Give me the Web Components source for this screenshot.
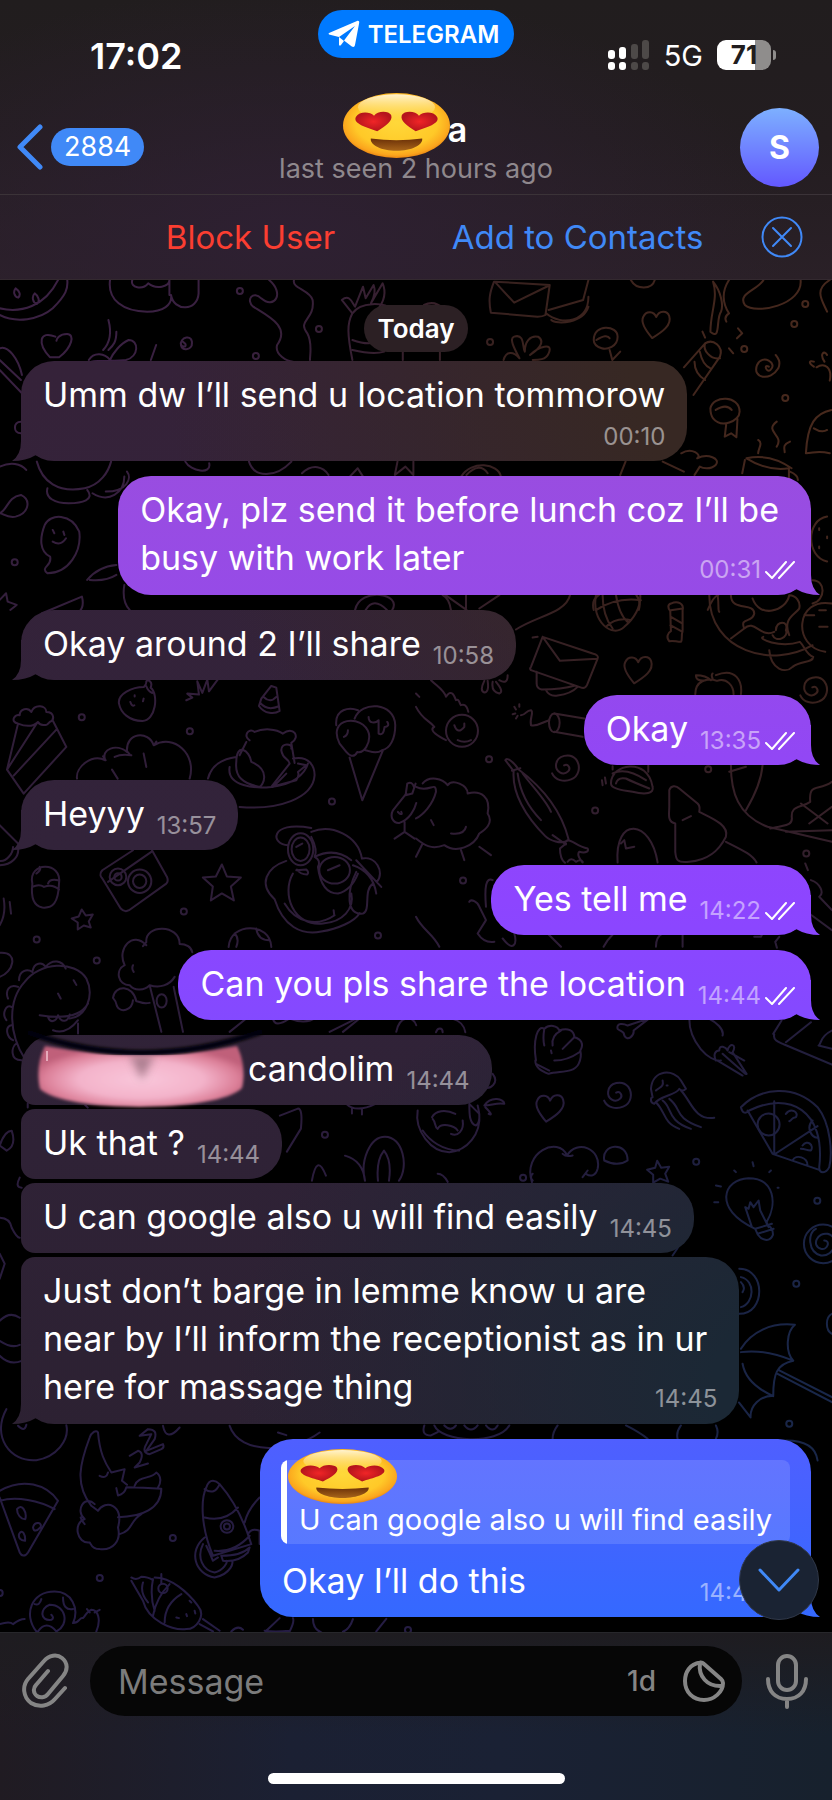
<!DOCTYPE html>
<html lang="en">
<head>
<meta charset="utf-8">
<meta name="viewport" content="width=device-width, initial-scale=1">
<title>Telegram chat</title>
<style>
    body {
        margin: 0;
        background: #000;
        color: #fff;
        font-family: Inter, "Liberation Sans", sans-serif;
    }
</style>
</head>
<body>

<chat-screen>
    <status-bar slot="top" time="17:02" app="TELEGRAM" network="5G" battery="71"></status-bar>
    <chat-header slot="top" unread="2884" initial="S">
        <heart-eyes slot="name"></heart-eyes>
        <span slot="name">a</span>
        <span slot="status">last seen 2 hours ago</span>
    </chat-header>
    <contact-actions slot="top"></contact-actions>

    <date-pill>Today</date-pill>
    <chat-message from="them" time="00:10" stacked>Umm dw I’ll send u location tommorow</chat-message>
    <chat-message from="me" time="00:31" class="long">Okay, plz send it before lunch coz I’ll be<br>busy with work later</chat-message>
    <chat-message from="them" time="10:58">Okay around 2 I’ll share</chat-message>
    <chat-message from="me" time="13:35">Okay</chat-message>
    <chat-message from="them" time="13:57">Heyyy</chat-message>
    <chat-message from="me" time="14:22">Yes tell me</chat-message>
    <chat-message from="me" time="14:44">Can you pls share the location</chat-message>
    <chat-message from="them" time="14:44" class="joined-below"><lips-sticker></lips-sticker>candolim</chat-message>
    <chat-message from="them" time="14:44" class="joined-above joined-below">Uk that ?</chat-message>
    <chat-message from="them" time="14:45" class="joined-above joined-below">U can google also u will find easily</chat-message>
    <chat-message from="them" time="14:45" class="joined-above long">Just don’t barge in lemme know u are<br>near by I’ll inform the receptionist as in ur<br>here for massage thing</chat-message>
    <chat-message from="me" time="14:47">
        <reply-quote slot="quote"><heart-eyes slot="author"></heart-eyes>U can google also u will find easily</reply-quote>Okay I’ll do this</chat-message>
    <jump-button slot="overlay"></jump-button>

    <message-composer slot="bottom" placeholder="Message" timer="1d"></message-composer>
</chat-screen>

<script>
class ChatScreen extends HTMLElement {

    connectedCallback() {
        this.attachShadow({ mode: 'open' });
        this.shadowRoot.innerHTML = `
            <style>
                :host {
                    display: flex;
                    flex-direction: column;
                    min-height: 100vh;
                }
                header {
                    background:
                        radial-gradient(ellipse 60% 90% at 35% 85%, #2e2032 0%, transparent 100%),
                        linear-gradient(180deg, #211d1e 0%, #231d20 50%, #2a2027 100%);
                    border-bottom: 1px solid #33292f;
                }
                main {
                    flex: 1;
                    position: relative;
                    background: #000;
                }
                .list {
                    position: relative;
                    display: flex;
                    flex-direction: column;
                    padding: 25px 21px 0;
                }
                chat-wallpaper {
                    position: absolute;
                    inset: 0;
                }
            </style>
            <header><slot name="top"></slot></header>
            <main>
                <chat-wallpaper></chat-wallpaper>
                <div class="list"><slot></slot></div>
                <slot name="overlay"></slot>
            </main>
            <slot name="bottom"></slot>
        `;
    }

}

class StatusBar extends HTMLElement {

    connectedCallback() {
        this.attachShadow({ mode: 'open' });
        this.shadowRoot.innerHTML = `
            <style>
                :host {
                    display: grid;
                    grid-template-columns: 1fr auto 1fr;
                    height: 100px;
                }
                .time {
                    padding: 34px 0 0 90px;
                    font-size: 36px;
                    line-height: 44px;
                    font-weight: 600;
                }
                .app {
                    display: flex;
                    align-items: center;
                    gap: 8px;
                    height: 48px;
                    margin-top: 10px;
                    padding: 0 15px 0 10px;
                    border: 0;
                    border-radius: 24px;
                    background: #007aff;
                    color: #fff;
                    font: 600 24px Inter, sans-serif;
                }
                .right {
                    display: flex;
                    justify-content: flex-end;
                    align-items: center;
                    height: 30px;
                    padding: 40px 56px 0 0;
                    gap: 14px;
                    font-size: 29px;
                    font-weight: 400;
                }
                .battery {
                    display: flex;
                    align-items: center;
                    gap: 2px;
                }
                .level {
                    width: 54px;
                    border-radius: 9px;
                    background: linear-gradient(90deg, #fff 71%, #8f8d8c 71%);
                    color: #211d1e;
                    font-size: 26px;
                    line-height: 30px;
                    font-weight: 700;
                    text-align: center;
                }
                .cap {
                    width: 3px;
                    height: 10px;
                    border-radius: 0 4px 4px 0;
                    background: #8f8d8c;
                }
            </style>
            <div class="time">${this.getAttribute('time')}</div>
            <button class="app">
                <svg width="32" height="28" viewBox="0 0 32 28" fill="#fff">
                    <path d="M1 13 29 1c1.500-.5 2.500.2 2.200 1.800L27 25c-.4 2-1.600 2.500-3.200 1.500L16 20.500 27 6 11 17 2 14.800C.6 14.400.2 13.500 1 13z"/>
                    <path d="M11 17v7.500c0 1.200 1 1.500 1.800.7L16 21z"/>
                </svg>
                ${this.getAttribute('app')}
            </button>
            <div class="right">
                <svg width="42" height="30" viewBox="0 0 42 30">
                    <g fill="#fff">
                        <rect x="0" y="10" width="7" height="9" rx="3"/><rect x="0" y="22" width="7" height="8" rx="3"/>
                        <rect x="11" y="7" width="7" height="12" rx="3"/><rect x="11" y="22" width="7" height="8" rx="3"/>
                    </g>
                    <g fill="#4d4948">
                        <rect x="23" y="4" width="7" height="15" rx="3"/><rect x="23" y="22" width="7" height="8" rx="3"/>
                        <rect x="34" y="0" width="7" height="19" rx="3"/><rect x="34" y="22" width="7" height="8" rx="3"/>
                    </g>
                </svg>
                <span>${this.getAttribute('network')}</span>
                <div class="battery"><div class="level">${this.getAttribute('battery')}</div><div class="cap"></div></div>
            </div>
        `;
    }

}

class ChatHeader extends HTMLElement {

    connectedCallback() {
        this.attachShadow({ mode: 'open' });
        this.shadowRoot.innerHTML = `
            <style>
                :host {
                    display: grid;
                    grid-template-columns: 1fr auto 1fr;
                    align-items: center;
                    height: 94px;
                    padding: 0 13px;
                    border-bottom: 1px solid #3b3338;
                }
                button {
                    border: 0;
                    padding: 0;
                    background: none;
                    color: #fff;
                    font: inherit;
                }
                .back {
                    justify-self: start;
                    display: flex;
                    align-items: center;
                    gap: 7px;
                    padding-left: 3px;
                }
                .unread {
                    padding: 0 13px;
                    border-radius: 19px;
                    background: #4089f7;
                    font-size: 27px;
                    line-height: 38px;
                }
                .title {
                    display: flex;
                    flex-direction: column;
                    align-items: center;
                }
                .name {
                    display: flex;
                    align-items: center;
                    padding-right: 22px;
                    height: 44px;
                    font-size: 34px;
                    font-weight: 600;
                }
                .status {
                    color: #8f888d;
                    font-size: 27px;
                    line-height: 36px;
                }
                ::slotted(heart-eyes) {
                    width: 107px;
                    height: 65px;
                    margin: -8px -2px 0 0;
                }
                .avatar {
                    justify-self: end;
                    width: 79px;
                    height: 79px;
                    border-radius: 50%;
                    background: linear-gradient(180deg, #7db0ff, #6358ff);
                    font-size: 32px;
                    font-weight: 700;
                }
            </style>
            <button class="back" aria-label="Back, ${this.getAttribute('unread')} unread">
                <svg width="28" height="46" viewBox="0 0 28 46" fill="none" stroke="#4089f7" stroke-width="5" stroke-linecap="round" stroke-linejoin="round">
                    <path d="M24 3 4 23l20 20"/>
                </svg>
                <span class="unread">${this.getAttribute('unread')}</span>
            </button>
            <div class="title">
                <div class="name"><slot name="name"></slot></div>
                <div class="status"><slot name="status"></slot></div>
            </div>
            <button class="avatar">${this.getAttribute('initial')}</button>
        `;
    }

}

class ContactActions extends HTMLElement {

    connectedCallback() {
        this.attachShadow({ mode: 'open' });
        this.shadowRoot.innerHTML = `
            <style>
                :host {
                    display: grid;
                    grid-template-columns: 58px 1fr 1fr 62px;
                    align-items: center;
                    height: 84px;
                    padding: 0 29px;
                }
                button {
                    border: 0;
                    padding: 0;
                    background: none;
                    color: #4089f7;
                    font: 400 33px Inter, sans-serif;
                    white-space: nowrap;
                }
                .block {
                    grid-column: 2;
                    color: #fb3e31;
                }
                .close {
                    justify-self: end;
                    height: 42px;
                }
                .close svg {
                    display: block;
                }
            </style>
            <button class="block">Block User</button>
            <button>Add to Contacts</button>
            <button class="close" aria-label="Close">
                <svg width="42" height="42" viewBox="0 0 42 42" fill="none" stroke="#4089f7" stroke-width="2" stroke-linecap="round">
                    <circle cx="21" cy="21" r="19.500"/>
                    <path d="m12 12 18 18M30 12 12 30"/>
                </svg>
            </button>
        `;
    }

}

class DatePill extends HTMLElement {

    connectedCallback() {
        this.attachShadow({ mode: 'open' });
        this.shadowRoot.innerHTML = `
            <style>
                :host {
                    align-self: center;
                    padding: 0 14px;
                    margin-bottom: 9px;
                    border-radius: 24px;
                    background: #2c2024;
                    font-size: 26px;
                    line-height: 47px;
                    font-weight: 600;
                }
            </style>
            <slot></slot>
        `;
    }

}

class ChatMessage extends HTMLElement {

    connectedCallback() {
        const mine = this.getAttribute('from') === 'me';
        const ticks = `
            <svg width="32" height="18" viewBox="0 0 32 18" fill="none" stroke="#fff" stroke-width="2" stroke-linecap="round" stroke-linejoin="round">
                <path d="m2 11 6 6L22 1M15 17 30 1"/>
            </svg>`;

        this.attachShadow({ mode: 'open' });
        // the gradients are fixed to the window, so the tint follows the place on screen
        this.shadowRoot.innerHTML = `
            <style>
                :host {
                    --tint:
                        radial-gradient(ellipse 80% 34% at 100% 20%, #372823 30%, rgba(55, 40, 35, 0) 100%),
                        radial-gradient(ellipse 72% 26% at 100% 77%, #1b2835 20%, rgba(27, 40, 53, 0) 100%),
                        linear-gradient(180deg, #352239 20%, #32233a 48%, #2c2132 80%);
                    position: relative;
                    display: flow-root;
                    align-self: flex-start;
                    padding: 10px 22px 12px;
                    margin-bottom: 15px;
                    border-radius: 33px;
                    background-image: var(--tint);
                    background-attachment: fixed;
                    font-size: 34px;
                    line-height: 48px;
                    white-space: nowrap;
                }
                :host([from="me"]) {
                    --tint: linear-gradient(180deg, #994de0 26%, #954aea 36%, #9146f8 44%, #8d45ff 50%, #8549ff 56%, #4f5fff 80%, #3469ff 90%);
                    align-self: flex-end;
                }
                :host(.long) {
                    padding-right: 32px;
                    padding-bottom: 13px;
                }
                :host(.joined-above) {
                    border-top-left-radius: 14px;
                }
                :host(.joined-below) {
                    border-bottom-left-radius: 14px;
                    margin-bottom: 4px;
                }
                :host(:not(.joined-below))::after {
                    content: "";
                    position: absolute;
                    bottom: 0;
                    left: -9px;
                    width: 30px;
                    height: 40px;
                    background-image: var(--tint);
                    background-attachment: fixed;
                    clip-path: path("M9 0V20Q9 34 0 40Q14 40 24 34Q27 36 30 37V0Z");
                }
                :host([from="me"])::after {
                    left: auto !important;
                    right: -9px;
                    clip-path: path("M21 0V20Q21 34 30 40Q16 40 6 34Q3 36 0 37V0Z") !important;
                }
                .meta {
                    float: right;
                    position: relative;
                    z-index: 1;
                    display: flex;
                    align-items: center;
                    gap: 3px;
                    margin: 24px 0 0 12px;
                    color: rgba(255, 255, 255, .5);
                    font-size: 24px;
                    line-height: 24px;
                }
                :host([from="me"]) .meta {
                    margin-right: -7px;
                }
                :host(.long) .meta {
                    margin-right: -10px;
                }
                :host([from="me"].long) .meta {
                    margin-right: -17px;
                }
                :host([stacked]) .meta {
                    float: none;
                    justify-content: flex-end;
                    margin: 6px 0 0;
                }
                ::slotted(reply-quote) {
                    margin: 11px -1px 13px -1px;
                }
            </style>
            <slot name="quote"></slot>
            <slot></slot><span class="meta"><time>${this.getAttribute('time')}</time>${mine ? ticks : ''}</span>
        `;
    }

}

class ReplyQuote extends HTMLElement {

    connectedCallback() {
        this.attachShadow({ mode: 'open' });
        this.shadowRoot.innerHTML = `
            <style>
                :host {
                    display: flex;
                    flex-direction: column;
                    justify-content: flex-end;
                    height: 84px;
                    box-sizing: border-box;
                    padding: 0 18px 4px 18px;
                    border-radius: 8px;
                    background: linear-gradient(90deg, #fff 6px, rgba(255, 255, 255, .13) 6px);
                    font-size: 29px;
                    line-height: 40px;
                }
                ::slotted(heart-eyes) {
                    width: 109px;
                    height: 55px;
                    margin: 0 0 -4px -11px;
                }
            </style>
            <slot name="author"></slot>
            <span><slot></slot></span>
        `;
    }

}

class HeartEyes extends HTMLElement {

    connectedCallback() {
        this.attachShadow({ mode: 'open' });
        this.shadowRoot.innerHTML = `
            <style>
                :host { display: block; flex: none; position: relative; z-index: 1; }
                svg { display: block; width: 100%; height: 100%; }
            </style>
            <svg viewBox="0 0 100 100" preserveAspectRatio="none" role="img" aria-label="Smiling face with heart eyes">
                <defs>
                    <radialGradient id="face" cx=".5" cy=".45" r=".55">
                        <stop offset="0" stop-color="#ffd83a"/><stop offset=".7" stop-color="#ffc928"/>
                        <stop offset=".92" stop-color="#fba51d"/><stop offset="1" stop-color="#e98613"/>
                    </radialGradient>
                    <linearGradient id="shine" x2="0" y2="1">
                        <stop offset="0" stop-color="#fff3cf"/><stop offset="1" stop-color="#ffe27a" stop-opacity="0"/>
                    </linearGradient>
                    <radialGradient id="heart"><stop offset="0" stop-color="#f02527"/><stop offset="1" stop-color="#b5141c"/></radialGradient>
                    <linearGradient id="mouth" x2="0" y2="1"><stop offset="0" stop-color="#6b3008"/><stop offset="1" stop-color="#a8651a"/></linearGradient>
                </defs>
                <circle cx="50" cy="50" r="50" fill="url(#face)"/>
                <ellipse cx="50" cy="22" rx="36" ry="20" fill="url(#shine)"/>
                <path d="M32 59C22 53 9 47 12 37c3-9 13-9 17-2 3-8 14-8 16-1 2 9-5 17-13 25z" fill="url(#heart)"/>
                <path d="M68 59c10-6 23-12 20-22-3-9-13-9-17-2-3-8-14-8-16-1-2 9 5 17 13 25z" fill="url(#heart)"/>
                <path d="M26 70q24 5 48 0c1 10-10 19-24 19S25 80 26 70z" fill="url(#mouth)"/>
            </svg>
        `;
    }

}

class LipsSticker extends HTMLElement {

    connectedCallback() {
        this.attachShadow({ mode: 'open' });
        this.shadowRoot.innerHTML = `
            <style>
                :host { display: inline-block; position: relative; width: 205px; height: 20px; }
                svg { position: absolute; left: -18px; bottom: -28px; }
            </style>
            <svg width="242" height="80" viewBox="0 0 242 80">
                <defs>
                    <radialGradient id="lip" cx=".5" cy=".55" r=".55">
                        <stop offset="0" stop-color="#f9c6da"/><stop offset=".55" stop-color="#f3b3ca"/>
                        <stop offset=".85" stop-color="#dc8099"/><stop offset="1" stop-color="#c0607a"/>
                    </radialGradient>
                    <filter id="soft"><feGaussianBlur stdDeviation="1.800"/></filter>
                    <filter id="softer" x="-50%" y="-50%" width="200%" height="200%"><feGaussianBlur stdDeviation="4"/></filter>
                </defs>
                <path d="M20 17q98 18 192 0c7 14 8 30 5 42-22 24-174 26-202 1-3-14-2-29 5-43z" fill="url(#lip)" filter="url(#soft)"/>
                <path d="M104 25q14 4 26 0l-13 26z" fill="#8d6676" opacity=".7" filter="url(#softer)"/>
                <path d="M5 4q112 40 230-1" fill="none" stroke="#030607" stroke-width="6" stroke-linecap="round" filter="url(#soft)"/>
                <path d="M22 22v10" stroke="#f3c3d0" stroke-width="1.500"/>
            </svg>
        `;
    }

}

class JumpButton extends HTMLElement {

    connectedCallback() {
        this.attachShadow({ mode: 'open' });
        this.shadowRoot.innerHTML = `
            <style>
                :host { position: absolute; right: 13px; bottom: 12px; z-index: 2; }
                button {
                    display: grid;
                    place-items: center;
                    width: 80px;
                    height: 80px;
                    padding: 0;
                    border: 1px solid #303849;
                    border-radius: 50%;
                    background: #1a2333;
                }
            </style>
            <button aria-label="Scroll to bottom">
                <svg width="42" height="24" viewBox="0 0 42 24" fill="none" stroke="#4089f7" stroke-width="3" stroke-linecap="round" stroke-linejoin="round">
                    <path d="m2 2 19 20L40 2"/>
                </svg>
            </button>
        `;
    }

}

class MessageComposer extends HTMLElement {

    connectedCallback() {
        this.attachShadow({ mode: 'open' });
        this.shadowRoot.innerHTML = `
            <style>
                :host {
                    display: block;
                    padding: 13px 20px 17px;
                    border-top: 1px solid #27272b;
                    background:
                        linear-gradient(180deg, #1e1c20 0%, rgba(30, 28, 32, 0) 60%),
                        linear-gradient(90deg, #201b22 0%, #1b2033 35%, #1a2134 60%, #17212d 100%);
                }
                .row {
                    display: flex;
                    align-items: center;
                    gap: 20px;
                    height: 70px;
                }
                button {
                    flex: none;
                    display: block;
                    padding: 0;
                    border: 0;
                    background: none;
                    color: #858585;
                    font: 500 28px Inter, sans-serif;
                }
                svg {
                    display: block;
                    fill: none;
                    stroke: #858585;
                    stroke-width: 4;
                    stroke-linecap: round;
                    stroke-linejoin: round;
                }
                .field {
                    flex: 1;
                    min-width: 0;
                    display: flex;
                    align-items: center;
                    gap: 27px;
                    height: 70px;
                    padding: 0 17px 0 28px;
                    box-sizing: border-box;
                    border-radius: 35px;
                    background: #060606;
                }
                input {
                    flex: 1;
                    min-width: 0;
                    padding: 0;
                    border: 0;
                    outline: 0;
                    background: none;
                    color: #fff;
                    font: 400 34px Inter, sans-serif;
                }
                input::placeholder {
                    color: #7c7c7c;
                }
                .home {
                    width: 297px;
                    height: 11px;
                    margin: 57px auto 0;
                    border-radius: 6px;
                    background: #fff;
                }
            </style>
            <div class="row">
                <button aria-label="Attach">
                    <svg width="50" height="56" viewBox="0 0 50 56">
                        <path d="M45 35 35 46C29 53 19 55 11 50 3 44 2 33 8 26L24 8c5-6 13-7 18-3 6 5 6 12 1 18L28 41c-3 4-8 4-11 2-4-3-4-8-1-11l12-14"/>
                    </svg>
                </button>
                <div class="field">
                    <input type="text" aria-label="Message" placeholder="${this.getAttribute('placeholder')}">
                    <button aria-label="Auto-delete timer">${this.getAttribute('timer')}</button>
                    <button aria-label="Stickers">
                        <svg width="42" height="42" viewBox="0 0 42 42">
                            <path d="M17 2.500C7 4 2 12 2 21c0 11 8 19 19 19 10 0 19-8 19-17 0-2-1-3-2-4L21 4c-1-1-2-2-4-1.500z"/>
                            <path d="M17 3c-2 13 7 24 22 23"/>
                        </svg>
                    </button>
                </div>
                <button aria-label="Record voice message">
                    <svg width="50" height="56" viewBox="0 0 50 56">
                        <rect x="16" y="3" width="18" height="34" rx="9"/>
                        <path d="M6 26c0 12 7 20 19 20s19-8 19-20M25 46v8"/>
                    </svg>
                </button>
            </div>
            <div class="home"></div>
        `;
    }

}

class ChatWallpaper extends HTMLElement {

    connectedCallback() {
        this.attachShadow({ mode: 'open' });
        this.shadowRoot.innerHTML = `
            <style>
                :host { display: block; overflow: hidden; }
                svg { display: block; width: 100%; height: 100%; }
                mask { fill: none; stroke: #fff; stroke-width: 2; stroke-linecap: round; stroke-linejoin: round; }
                mask * { vector-effect: non-scaling-stroke; }
            </style>
            <svg viewBox="0 280 832 1351" preserveAspectRatio="xMidYMin slice" aria-hidden="true">
                <defs>
                    <linearGradient id="base" x2="0" y2="1">
                        <stop offset="0" stop-color="#3b2143"/><stop offset=".4" stop-color="#2e1d37"/><stop offset="1" stop-color="#241c44"/>
                    </linearGradient>
                    <radialGradient id="warm" gradientUnits="userSpaceOnUse" cx="860" cy="380" r="720">
                        <stop offset="0" stop-color="#4a2a1c"/><stop offset=".5" stop-color="#38211e"/><stop offset="1" stop-color="#2e1d37" stop-opacity="0"/>
                    </radialGradient>
                    <radialGradient id="cold" gradientUnits="userSpaceOnUse" cx="900" cy="1400" r="560">
                        <stop offset="0" stop-color="#172a4e"/><stop offset=".5" stop-color="#1c2040"/><stop offset="1" stop-color="#241c3c" stop-opacity="0"/>
                    </radialGradient>

                    <symbol id="dot" overflow="visible"><circle r="3"/></symbol>
                    <symbol id="heart" overflow="visible"><path d="M-4 13C-10 6-16-2-13-8c3-7 11-6 13 0 3-7 11-7 13-1 3 9-7 16-17 22z"/></symbol>
                    <symbol id="curl" overflow="visible"><path d="M0 0c4-2 7 3 4 6-5 5-13 0-12-7C-7-10 6-13 12-6c5 7 3 17-5 20-7 3-16 1-19-6"/></symbol>
                    <symbol id="star" overflow="visible"><path d="m0-18 5 12 14 1-10 9 3 14-12-7-11 7 2-14-10-9 13-1z"/></symbol>

                    <mask id="doodles" maskUnits="userSpaceOnUse" x="0" y="280" width="832" height="1400">
                        <!-- top band -->
                        <g transform="translate(0 280) scale(.53 .333)">
                            <path d="M0 105c30 25 75 15 100-20 25-40 30-60 27-90M0 85c40 15 85-5 110-85M30 25c8 8 10 20 5 28-8-4-10-18-5-28zM66 40c8 8 10 25 4 32-8-4-10-22-4-32z"/>
                            <path d="M208 0c-5 60 25 95 70 95 30 0 48-20 45-50 5 50 50 50 52-5V0M250 0c-5 25 20 30 30 10 15 20 40 10 40-10M320 45V0"/>
                            <path d="M508 0c30 40 10 90-15 55-15-25-30 5-15 25 30 30 70 60 45 115-5 30 20 50 30 50M555 0c-5 25 30 30 35 60 5 60-30 60-10 100 10 30 5 60 5 80"/>
                            <path d="M665 240c-10-80-10-110 0-140 15-35 60-35 75-10M665 100l-20-40c15-20 20 10 25 20l15-60 5 35 15-40c5 20 0 40-5 55l22-60c8 30 0 60-10 80M665 180q35 20 50 0M665 210q40 15 60 5M760 240v-28M830 240v-28M800 75q20-15 35 10"/>
                            <path d="m932 5 105 10-8 90c-5 5-10 5-15 5l-88-12c-5-40-2-60 6-93zM935 8l35 60 64-50M1110 0l-10 60-65 30M1030 100c30 40 80 25 80-50M1040 120c10 15 60 10 70-40"/>
                            <path d="M105 170c-30-20-35 20-10 62M95 232h17c25-30 30-70 15-70s-20 15-20 20"/>
                            <path d="M205 120c5 30 5 65-10 90M220 155c0 30-5 40-15 55M168 240c10-25 30-20 40 0 5-20 20-50 35-60 20 0 20 50-5 60-15 5-50 0-65 5M285 240l10-45M345 185c10 10 5 20-3 12-5-25 25-40 20 0-5 15-20 15-20-5"/>
                            <path d="M950 240c5-30 20-25 30-5-10-30-20-60-10-65 20-10 15 30 20 45 0-30 10-50 25-45 15 15 0 40-15 55 15-25 45-40 35-5-5 20-20 20-30 20"/>
                            <path d="M1120 180c0-50 45-45 45-10 0 30-20 40-30 35-10-5-15-15-15-25zM1125 180q20-20 25-5M1150 210l5 30 15-25"/>
                            <path d="M1345 5c10 50-5 90-5 150 20 30 10-40 20-60 5-20 0-60-15-90M1375 0q-20 50 0 100-10 10-5 25M1440 0c-10 30-50 40-35 75 20 30 110 0 105-75M1190 0c10 30 40 30 45 0M1565 0c-30 30-15 60-5 95"/>
                            <path d="M1290 262 1330 190c15-15 35 10 28 40l-50 115M1330 190c-5 20 10 50 28 45M1320 215q5 40 20 50M1310 245q0 35 20 55M1325 155l5 18M1392 145l8 15-10 15M1375 205l8 15"/>
                            <path d="M1450 260c-10-10-5 20 3 10 15-20-15-50-25-15-10 40 25 50 40 10 5-20 0-30-5-40"/>
                            <path d="M1540 262c15-15 30 0 25 40M1555 245c-10-25 0-35 5-20M1535 260c-10-10-10-20 0-15M1340 385c5-40 55-40 55 10 0 30-35 50-50 20q-5-10-5-30zM1350 390q20-20 30 0M1370 430l-3 40 12-10 10 12 2-55"/>
                            <path d="M1465 425c-25 30 15 40 0 75M1430 480c10 10 0 25 0 40M1490 485c-15 10-10 20-10 32M1408 535q45-15 85 30M1405 540l-5 40M1408 535q40 40 80 30v40M1490 575q15 10 15 25M1568 390c-30 10-45 40-48 130 15 0 20-10 45 0M1535 445q15 15 25 5"/>
                            <path d="M0 205c15-10 35 30 42 80M0 240l40 60M0 270l42 70M40 425c-15 0-15 35 0 35"/>
                            <path d="M70 545c10 60 40 95 90 80 30-10 45-50 50-80M90 625c-5 30 15 45 40 45 25 0 50-10 35-40M175 640c30 30 60 0 60-50M200 635c40 0 50-40 40-60M0 560c20-15 40-10 50 10M350 545c10 30 50 40 45 5M470 545c10 50 50 50 80 0M570 580c20-30 40-20 50 5M660 590l15-25 10 25M750 545l-5 40 20-25 15 25V545"/>
                            <path d="M870 590c20-50 70-40 75 0M880 585q25-40 40-5M1180 545l-10 40M1285 520c20-20 40 5 30 15 20-15 45 0 35 20-10 15-25 10-30 5l-10 25M1250 545l40 30"/>
                            <path d="M85 735c10-35 50-35 65 20 5 60-20 125-60 125-15-20 10-20 5-50-20-15-20-55-10-95zM100 750l3 10M120 755l2 10M100 785q15 15 25-10M0 700c15-10 15-50 40-55 20 15 15 55-10 65-15 5-25-10-30-10zM165 900q20-40 55-45M170 900q30 5 50-15M235 915q-5 50 10 75M0 960l12-20 3 25 17 10-12 15M80 1000l75-50q5 30-5 45M670 990c10-70 90-50 70 0M690 990q15-40 40 0M840 945l40 45M1120 990q-5-30 10-45M1200 945q10 20 5 45M1335 990q10-40 20-45M1560 710c-40 10-40 120 0 135M1545 745v5M1560 770v5M1545 800v5"/>
                        </g>
                        <!-- left middle -->
                        <g transform="translate(0 670) scale(.333)">
                            <path d="M55 160 22 298l50 72 128-140-40-78M55 160c-25-5-10-30 5-25 0-20 25-25 35-10 10-25 45-20 45 0 25 0 25 25 10 30-10 15-30 10-35 0-15 15-35 15-60 5zM22 298l90-140M42 316l128-138"/>
                            <path d="M358 100c-5-30 40-50 75-50 15-20 0-10 10-20 10 0 15 10 10 22 25 20 15 100-25 100-40 0-65-25-70-52zM392 95q5 15 12 10M405 75v4M432 85l-2 8M440 48q5 15 18 20M560 90l18-8-15-12 35 3-5-40 15 35 15-40 5 35 30-40M785 85l30-38 15 5 10 70c-15 10-45 10-62-15zM792 80q20 20 38 0M782 98q20 25 56 10"/>
                            <path d="M232 325c-5-35 45-75 85-55-15-35 35-50 65-25-5-60 65-65 80-20 60-35 130 25 108 100M318 270l-8-12M345 260q20-10 50-5M380 240l10 12M432 250l8 40M337 298l17 27M465 222l5-8"/>
                            <path d="M625 325c10-40 45-60 85-65M690 290c-10 60 80 65 125 60 60-5 100-35 110-70M880 265c50-10 65 25 65 50-5 70-110 105-225 95M710 275c0-60 40-35 45 0 60 25 35 70 25 75-50-10-75-30-70-75zM750 210c-20-10-5-40 15-25 25-12 65-10 85 5 30-25 55 10 25 28l10 60M740 215l-20 40M845 240c0-25 35-20 30-5M845 240c5 30 20 20 25 40l-55 70 75-20q10-15 5-25l25-20-25-5M860 310l-40 40"/>
                            <path d="M1010 165c-5-50 40-55 65-45M1065 145c20-55 120-50 122 20 0 40-15 70-40 75-20 15-40 0-50 0M1040 245l-20-25c-40-80 70-90 88-30 5 30-15 60-35 55-10 20-25 10-33 0zM1045 180q0 15-12 20M1050 262l38 128 62-150M1107 140c0 20 20 20 30 10v40c10 5 15 0 18-20 8 0 15-5 8-15"/>
                            <path d="M1248 340l-10 30-20 5 5-35q15-8 20 10M1220 370l-40 50c-10 20 0 40 20 38 30-10 45-40 50-60M1195 425l5 5q10 5 5-5M1215 455v30l-30 20M1215 485l30 20M0 465l55 55M55 530c5 30-20 55-55 55M40 530c0 20-20 45-40 42M12 685c5 30 0 60-12 80M30 695l4 35M0 848c60-5 40 60 0 72"/>
                            <path d="M98 640c-15-65 90-70 80 0-2 60-20 75-50 72-25-5-35-30-30-72zM98 650q20-10 35 0 25-10 45 8M110 610q15-10 10-20M145 640q5-15 30-10"/>
                            <path d="M400 540l-92 60c-10 10-5 20 0 25l55 90c10 10 20 8 25 5l112-80c5-5 4-15 2-20l-45-80M325 635l130-90"/>
                            <circle cx="355" cy="620" r="25"/><circle cx="355" cy="620" r="11"/><circle cx="420" cy="633" r="35"/><circle cx="420" cy="633" r="20"/>
                            <path d="M935 485c60-25 140 10 152 80 40-10 70 40 45 70M865 525c-50 0-60-75 70-52M860 572c-60 20-85 70-35 115 25 80 80 110 140 97 50-8 100-30 115-55M880 610c-35 60 0 160 90 150 60-5 95-45 85-90M890 600l30-2q10 10 2 15-20 0-30-15zM855 700c35 60 100 70 150 35M1002 720l2 15M1070 605c-30 60-30 130 20 125 25-10 0-70 30-90M1070 570l75 80M1060 585q60 20 70 85"/>
                            <ellipse cx="903" cy="537" rx="27" ry="35"/><ellipse cx="903" cy="537" rx="38" ry="48"/><ellipse cx="1005" cy="600" rx="46" ry="40"/><path d="M935 500q20 40 10 60 20 10 10 30 10 80 60 80 40-10 60-60M945 560q60-30 110 10M890 530l18-10M985 600l35-15"/>
                            <path d="M440 825c-40-45-90 10-65 60-30 15-20 60 15 60 15 20 45 15 60 0 30 10 60 0 75-25M430 828l10-12c-5-55 100-55 100 5 20 0 35 10 38 25M400 885q-5 10 2 20M450 945l35 140M522 950l28 135M450 998c-25 5-30-5-40-5-10-50-65-50-70-10 5 5 10 15 12 25 10 20 45 15 48-18M687 830c5-75 125-75 128 0M705 790q15 15 5 40M770 775q5 35 40 35"/><ellipse cx="486" cy="992" rx="15" ry="20"/>
                            <path d="M75 1165c-45-70-55-170 0-230 45-60 150-65 185-10 25 50 0 115-50 120M58 930c0-30 25-35 40-25 5-30 30-30 40-15 20-25 50-20 60 5M25 985c-10-25 5-45 30-35M20 1050c-15-20 0-50 15-40M40 1110c-20-10-25-40-5-45M65 1170c-35 0-30-40-15-50M120 1035c60 10 120 10 145-35M145 1040c5 20 25 15 30-5 10 25 30 20 35-2M160 1080q40 15 75-30M235 1060v30M175 970l8 15M222 930l8 14"/>
                            <path d="M690 1085l50-40M820 1045q5 30 50 0M870 1045q50 20 80-5M990 1085l80-40M1030 1085l50-40M1190 1085c10-50 50-50 60-20"/>
                        </g>
                        <!-- right middle -->
                        <g transform="translate(416 560) scale(.333)">
                            <path d="M80 105q20 10 25 45M150 105v40M190 145l60-40M300 208c60-40 150-50 162-103M540 105c-15 80 50 130 85 95 30-25 50-60 48-95M560 105q0 60 30 100M600 105q10 60 35 80M540 150q60-40 135-30M570 200q30-30 75-20"/>
                            <path d="M765 130c20-10 40 0 35 20v60c-5 20 0 30-5 35-15 0-20-5-35-2-10-10-5-25 5-30l-2-60c-8-10-8-20 2-23zM765 150l35-5M765 170l35 20M763 195l37 20"/>
                            <path d="M880 105c0 170 190 220 310 150M905 105c5 30 0 45 5 50M945 105c0 50 70 20 70 55-5 30-45 10-30 45 30-30 50 30 90 10M985 205l-40 30M1010 115c20 60 100 40 110-10 20 0 35 20 30 40-15 20-50 30-30 80M1080 210c0-30 40-30 30 0 10 20-30 40-40 15M1060 270c5 60 50 70 70 50 25-20 60-10 62-30-20-5-25-30-40-45-60 20-130-10-110-15M1190 60c40 0 40 60 0 70M1248 130c-110-20-120 130-20 145M1165 165h30M1210 150h20M1210 200h25"/>
                            <path d="m380 230 150 50q20 5 15 15l-32 80q-5 10-15 8L345 330q-5-5 0-10zM380 230l52 72 112-6M350 232l15-2M362 335v35q0 15 15 18 60 0 100-12M390 390q10 20 35 16 40-5 60-26"/>
                            <path d="M205 362q-15 30 0 35 15 0 10-35M230 365q-5 30 20 35 15-5-10-35M250 360q25 15 25-15M838 402c0-40 35-50 65-40 30-10 50 15 50 40M870 360q-30 5-30-15 30 0 45 15M890 355q-5-10 0-15M900 345c60-25 80 20 75 57"/>
                            <path d="M45 360c20 20 40 30 45 50 15-25 25-5 30 10 10-5 10 10 15 15 15-5 20 10 22 20M0 400l10 10M0 440c20 40 40 40 55 60-20 10 15 30 35 40M115 495q10 30 30 5v-10M125 540q20 10 40 0"/><circle cx="138" cy="512" r="48"/>
                            <path d="M345 495c-5-20 10-40 0-45-15 0-15 15-30 15M345 495c20 5 35-10 55-15M415 460l90 15M415 515l85 15M295 440l5 8M310 432v8M290 462l8-2M300 475l5-8"/><ellipse cx="415" cy="488" rx="16" ry="28"/>
                            <path d="M268 600c5-10 25 5 40 28 80 60 130 130 150 210-20 20-60 0-70-10-60-60-100-130-95-195zM288 632l25-8M305 640c10 80 60 130 70 140M320 640c30 40 70 80 85 115M410 825l40 28M450 850l-18 15c0 20 5 35 15 43M455 840c15 0 30 20 60 25 5 8-5 15-25 10-10 10 5 25 10 32M455 905q10-15 25 0 15-10 20 0"/>
                            <path d="M585 670c0-60 110-80 125 10 5 20-20 25-60 15-35-5-65-10-65-25zM590 640q40-20 100 20M600 670q5-20 30-15 20 10 70 30M560 675l-2-15M570 670l-3-18M590 618v10M697 615v20"/>
                            <path d="M760 690c5-15 20-15 30-5l55 45c10 10 5 20 5 25 40 20 90 40 80 75-20 40-50 70-110 75-40 5-40-10-42-30V790c-25-5-18-30-18-50zM800 780l25-12M930 845c60 30 80 40 92 62M605 907c-10-140 100-130 120 0M615 850l10-10 5 25 25-5"/>
                            <path d="M945 615c0 80 20 150 110 185l193 45M1040 615q-5 60-50 135M940 635l50-15M1248 665c-40 30-70 0-65 60-30 20-60 10-55 50 0 20-20 20-40 25l-25 5M1155 730l80 60M1110 815l138-5M1180 790l68-50M1185 960c30 10 40 40 25 50l38 40M1168 910l8 20M1180 1060l68 50"/>
                            <path d="M0 680c40 20 60-20 60 15-10 40-40 70-60 80M20 670c20-25 60-15 75 5 15-20 60 0 60 25 40-10 70 10 60 60 20 30-10 50-25 60-15 40-70 60-105 35-40 15-60 0-85-20M45 780l8 15M105 820q40 5 45-20M20 850l-20 40M135 870l10 30M190 860l35 25"/>
                            <path d="M230 960c-20-10-25 20-20 80M160 1025c5-10 25 0 30 15l20 40-25 40q20 30 50 25M260 1135c30 40 45 20 35-15M0 1070c20 40 50 50 70 90M395 1120l40 40M563 1160q10-20 30-40M720 1160q0-30 20-40M800 1120v40M1015 1130h20l5-10M1090 1130l-12 15 5 18"/>
                        </g>
                        <!-- right lower -->
                        <g transform="translate(416 1010) scale(.333)">
                            <path d="M60 65c5-15 20-15 20 0M110 25c20 5 35 20 38 40M230 190c20 25-5 50-30 40M5 300c-10 60 40 125 95 125 55-5 95-55 90-115l-30-30M20 360c20 30 60 60 110 60M160 280c0 30 0 60 20 65 15-10 10-40 5-60M48 320c10-20 40-25 70-10M50 325c10 10 5 25 15 30 10-20 50-10 60 5M105 370c20 10 40-10 35-40M205 285c20-30 60-20 60-5-20-5-40 5-60 5zM208 290c20 20 20 25 10 20"/>
                            <path d="M360 150c-10-60 5-110 25-95 15-15 40-10 45 5 25-10 45 0 45 20 20 5 30 20 18 40 5 20 0 30-5 40-15 30-60 20-90 30-25-10-40-20-40-40zM360 160l40 20M385 55q-5 30 0 50M410 105q-5-30 25-45M440 115l35-35M415 150q40 0 75-25M405 120l2 8"/>
                            <path d="M605 55c-5-20 20-15 30-10l60-20M605 55c10 10 20 5 20 20 10 20 30 0 28-15l45-35M820 25c0 70 60 130 95 125M880 25c20 10 45 30 40 50M900 150c-10-20 0-30 10-30 0-20 20-10 25 0 5-25 30-20 15 5l42 65M905 150l75 45M920 130l68 60M940 125l45 25M1072 70l25-40M1075 72c-5 20 20 25 30 30l143 60M1110 95l75-60M1248 60c-40 20-30 40-40 45l40 10"/>
                            <path d="M705 235c5-60 70-60 90-25l15 25q-10 10-20 0c-10 20-60 20-75 45-15-5-10-20-5-20zM720 240c10-10 25-10 20-30M752 225h3M720 275c30 30 20 60 70 80M740 270c30 20 10 60 85 85M760 265c40 30 10 55 95 85M795 240c30 30 40 90 100 82"/>
                            <path d="M975 290c60-60 160-70 230 0 40 50 45 140 35 180-10 20-30 20-30 0 20-170-90-230-210-170-10 10-20 10-25-10zM995 300l75 130 140 48M1075 272v160l130-85M1110 310c15-20 40-5 30 10-15 0-10 10-20 12M1160 405c15-20 35 0 25 15-15 0-15-5-30-5M1130 450c10-20 45-10 45 15M1190 330c-20 20-5 50 15 52"/><circle cx="1058" cy="342" r="33"/>
                            <path d="M348 515c-30-90 80-140 105-80 30-50 105-20 92 40-5 20-20 25-35 15M440 430q10 10 30 5M350 490q-10 10 0 20M515 480l-15 20M565 450c-10-50 70-60 70 0q-30 20-70 0zM65 490c15 0 25 15 30 24"/>
                            <path d="M1018 655c-130-60-95-150-20-152 80 0 85 80 55 130-5 15 20 10 18 40-10 25-35 15-45 0zM1018 655l50-15M1025 670l48-15M1008 650l-20-60 10 5 5-20 10 15 15-20 5 30 25 50M900 525l15 3M895 575h12M955 480l5 5M1010 455l3 12M1065 480l-5 5M1085 532h3"/>
                            <path d="M970 775c80 0 80 135 0 135M975 800c45 10 40 80 0 90M975 815q15 15 5 30"/><circle cx="1222" cy="700" r="58"/><path d="M1225 690c20 0 10 30-10 25-30-10-10-50 20-45 40 10 20 70-20 65-40-10-40-70-15-80M1248 910c-20 10-20 50 0 60"/>
                            <path d="M975 1015c30-50 90-80 162-72-25 20-30 80-5 108-50 10-60 40-60 105-40 0-70 30-68 65l-35-45M975 1025q70-10 155 25M980 1060q10 60 92 97M1085 1090l163 85M1090 1080l158 80M410 1285q0-20 15-40M630 1245q40 20 65 40M785 1285q-5-20 10-40M900 1245q10 20 0 40M1110 1290c60 0 90 20 95 60M55 1245c20 50 190 60 225 0M25 1245q-10 30 20 30l20-10M85 1245q20 20 35 0M145 1245q20 25 40 0M210 1245q20 25 35 0M770 735q15-20 25-40"/>
                        </g>
                        <!-- left lower -->
                        <g transform="translate(0 1400) scale(.333)">
                            <path d="M20 25c-45 80 10 160 90 153 60-10 100-60 90-105M55 75q20 20 25-3M690 75c30 90 190 80 270 20M835 95l25 8"/>
                            <path d="M0 270c70-40 140-20 175 30l-90 155c-10 15-20 10-25 0L0 290M0 300c50-15 120 0 165 25M52 325c15-20 30 10 25 30-15 0-25-15-25-30zM100 380c5-20 30-15 22 0-10 10-20 15-22 0zM58 400c10-20 20 5 18 20-15 0-20-10-18-20z"/>
                            <path d="M295 95c-5-10-20 0-25 15-30 80-45 140 5 205l20 15M295 95c5 60 20 90 40 120l40-10-8 35 15 12M300 225q20 10 25-10M350 262l5 22q20-5 25-25 50 0 105 5c0 60-60 85-130 85M405 255c10-30 50-20 65-40 15 10 15 30 5 45M360 400c40-10 30-40 65-60M295 330c20-35 80-20 60 50 10 40-15 70-55 65-25 0-25-15-30-20-40 5-50-60-15-70-30-25 0-75 30-45M255 370q-10-10-12-20"/>
                            <path d="m390 165 25-15q20 5 5 35l-15 15 40-12M420 105l25-20q30 0 20 30l-25 35 50-20q5 10-5 15l-35 15q-25-5-10-30l15-30zM490 75q10 50 50 5"/>
                            <path d="M620 260c10-30 30-20 40-10 70 80 90 170 95 180l-115 35C600 370 605 290 620 260zM615 265q30 20 45-15M615 350q60 15 100-30M645 450q60 5 105-45M665 465q60 0 85-25l-5 15q-30 30-75 25zM735 365q10-40 45-75M745 400q10-20 35-10v40M615 410c-50 40-30 110 30 120 50-10 60-50 50-50M610 430c-20 40 0 80 35 85 25-5 40-30 35-35M620 435q10 20 20 45l15-10"/><circle cx="682" cy="377" r="19"/><circle cx="682" cy="377" r="9"/>
                            <path d="M395 540l35 60c15 60 90 90 130 85 30 0 60-40 35-70-30-40-80-85-130-85M395 530q15 10 30-2 20 0 35 10M430 545q-10 30 15 60M460 535q-10 50 5 95M510 550q-40 40-50 95M545 580q-50 30-50 85M485 520v30M600 670l40 22M610 655l50 35M570 600l5 5M560 640l2 6M530 650l8 2M585 630l2 8"/><circle cx="490" cy="563" r="14"/>
                            <path d="M110 692c-40-50-15-120 55-120 50 0 75 50 55 95 20 0 20-20 30-15 10-10 10-20 25-25 20 0 30 30 15 65M115 692q25-35 55 0c40-20 30-80-20-80-30 10-30 50 5 45q10-5 0-15M270 635l-8-10M285 635l15-8M105 610q15 5 20-15M190 590q0 40 30 35M0 670q30-10 40 0 20-15 35-15M695 692q20-20 35-5M800 690l40-38M795 690q30 5 75 0M870 692q15-30 10-40M940 655q0 30 25 40M1060 655q-10 30-30 38M1130 692l30-38"/>
                        </g>
                        <g>
                            <use href="#dot" x="240" y="291"/><use href="#dot" x="319" y="329"/><use href="#dot" x="256" y="356"/><use href="#dot" x="490" y="342"/><use href="#dot" x="805" y="304"/><use href="#dot" x="794" y="324"/><use href="#dot" x="744" y="349"/><use href="#dot" x="785" y="398"/><use href="#dot" x="15" y="562"/>
                            <use href="#dot" x="82" y="717"/><use href="#dot" x="190" y="731"/><use href="#dot" x="332" y="801"/><use href="#dot" x="184" y="911"/><use href="#dot" x="37" y="939"/><use href="#dot" x="97" y="960"/><use href="#dot" x="378" y="935"/>
                            <use href="#dot" x="489" y="759"/><use href="#dot" x="595" y="810"/><use href="#dot" x="708" y="769"/><use href="#dot" x="806" y="853"/><use href="#dot" x="463" y="880"/><use href="#dot" x="696" y="1161"/><use href="#dot" x="817" y="1200"/><use href="#dot" x="796" y="1283"/><use href="#dot" x="789" y="1423"/><use href="#dot" x="325" y="1134"/><use href="#dot" x="523" y="1177"/>
                            <use href="#dot" x="173" y="1537"/><use href="#dot" x="100" y="1577"/><use href="#dot" x="0" y="1592"/><use href="#dot" x="408" y="1629"/>
                            <use href="#heart" x="656" y="325"/><use href="#heart" x="638" y="670"/><use href="#heart" x="550" y="1108"/>
                            <use href="#curl" x="564" y="765"/><use href="#curl" x="812" y="687"/><use href="#curl" x="616" y="1092"/>
                            <use href="#star" x="222" y="882"/>
                            <path d="m82 909 4 6 7-1-4 7 2 6-7-2-6 4v-7l-6-4 7-2zM657 1160l4 7 8-1-4 7 3 8-8-3-7 4v-8l-6-5 8-2z"/>
                            <!-- peeking out between the lower bubbles -->
                            <path d="M28 1103v4M84 1103l4 4M346 1103q10 10 30 0M352 1107v6M362 1108v6M280 1115l18-7q5 0 3 20l-14 23M365 1180c-5-20 5-44 20-44 18 0 24 30 14 44M378 1180q-2-20 6-30 8 10 5 30M312 1180q5-28 14-5M345 1155q18 5 20 25M0 1145q5-15 12-15 5 15-5 20zM20 1177q-5 10 2 10M0 1217q10 0 12 10 5 10 8 10M0 1253l5 10-5 15M0 1320q10-10 20-3M0 1340q12 8 20 4M0 1355q10 10 22 5"/>
                        </g>
                    </mask>
                </defs>
                <g mask="url(#doodles)">
                    <rect y="280" width="832" height="1400" fill="url(#base)"/>
                    <rect y="280" width="832" height="1400" fill="url(#warm)"/>
                    <rect y="280" width="832" height="1400" fill="url(#cold)"/>
                </g>
            </svg>
        `;
    }

}

customElements.define('heart-eyes', HeartEyes);
customElements.define('lips-sticker', LipsSticker);
customElements.define('reply-quote', ReplyQuote);
customElements.define('status-bar', StatusBar);
customElements.define('chat-header', ChatHeader);
customElements.define('contact-actions', ContactActions);
customElements.define('date-pill', DatePill);
customElements.define('chat-message', ChatMessage);
customElements.define('chat-wallpaper', ChatWallpaper);
customElements.define('jump-button', JumpButton);
customElements.define('message-composer', MessageComposer);
customElements.define('chat-screen', ChatScreen);
</script>
</body>
</html>
